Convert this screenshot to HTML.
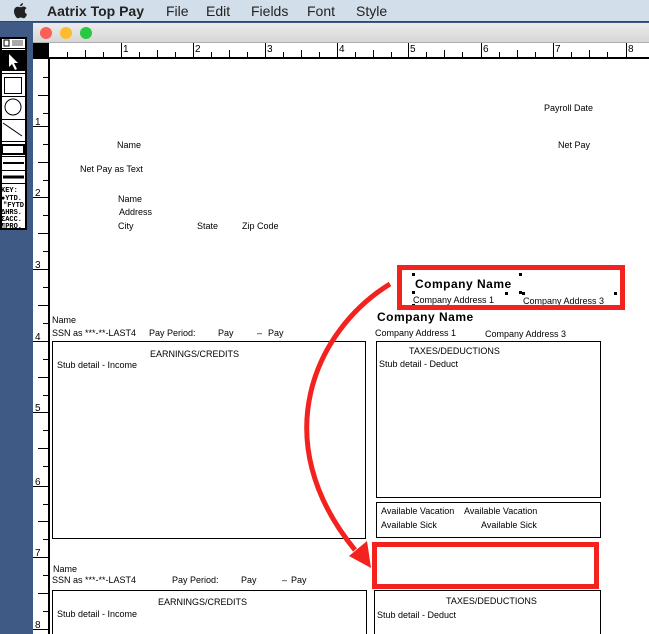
<!DOCTYPE html>
<html><head><meta charset="utf-8"><style>
*{margin:0;padding:0;box-sizing:border-box}
html{width:649px;height:634px;overflow:hidden}
body{width:649px;height:634px;overflow:hidden;background:#3f5b85;position:relative;font-family:"Liberation Sans",sans-serif;font-size:9px;color:#000}
.a{position:absolute;white-space:nowrap;line-height:10px}
.box{position:absolute;border:1px solid #000}
.red{position:absolute;border:5px solid #f4221e}
.b{font-weight:bold;font-size:12px;letter-spacing:0.5px}
</style></head><body>
<div class="a" style="left:0;top:0;width:649px;height:22px;background:#d2deea;border-bottom:1px solid #34465e"></div>
<svg class="a" style="left:13px;top:3px" width="15" height="16" viewBox="0 0 15 16"><path d="M10 0c0 2-1.5 3.3-3 3.2C7 1.5 8.5 0.2 10 0zM7.5 4.2c1 0 2-.7 3-.7 1.3 0 2.4.7 3 1.7-2.5 1.4-2 5 .5 6-.6 1.6-1.8 4-3.2 4-1.2 0-1.5-.7-2.9-.7-1.5 0-1.9.8-3 .8C3.4 15.3 1 11.5 1 8.3 1 5.3 3 3.8 4.7 3.8c1.2 0 2 .4 2.8.4z" fill="#222"/></svg>
<div class="a" style="left:47px;top:3px;font-size:14px;line-height:16px;font-weight:bold;color:#222">Aatrix Top Pay</div>
<div class="a" style="left:166px;top:3px;font-size:14px;line-height:16px;color:#222">File</div>
<div class="a" style="left:206px;top:3px;font-size:14px;line-height:16px;color:#222">Edit</div>
<div class="a" style="left:251px;top:3px;font-size:14px;line-height:16px;color:#222">Fields</div>
<div class="a" style="left:307px;top:3px;font-size:14px;line-height:16px;color:#222">Font</div>
<div class="a" style="left:356px;top:3px;font-size:14px;line-height:16px;color:#222">Style</div>
<div class="a" style="left:33px;top:23px;width:616px;height:20px;background:linear-gradient(#ececec,#d6d6d6);border-bottom:1px solid #b0b0b0"></div>
<div class="a" style="left:40px;top:27px;width:12px;height:12px;border-radius:6px;background:#fc5f57"></div>
<div class="a" style="left:60px;top:27px;width:12px;height:12px;border-radius:6px;background:#fdbc2e"></div>
<div class="a" style="left:80px;top:27px;width:12px;height:12px;border-radius:6px;background:#28c840"></div>
<div class="a" style="left:33px;top:43px;width:616px;height:591px;background:#fff"></div>
<div class="a" style="left:33px;top:43px;width:16px;height:16px;background:#000"></div>
<div class="a" style="left:49px;top:57px;width:600px;height:2px;background:#000"></div>
<div class="a" style="left:48px;top:57px;width:2px;height:577px;background:#000"></div>
<svg class="a" style="left:0;top:0" width="649" height="634">
<g stroke="#000" stroke-width="1" shape-rendering="crispEdges">
<path d="M67.5 52V57M85.5 50V57M103.5 52V57M121.5 43V57M139.5 52V57M157.5 50V57M175.5 52V57M193.5 43V57M211.5 52V57M229.5 50V57M247.5 52V57M265.5 43V57M283.5 52V57M301.5 50V57M319.5 52V57M337.5 43V57M355.5 52V57M373.5 50V57M391.5 52V57M408.5 43V57M426.5 52V57M444.5 50V57M462.5 52V57M481.5 43V57M499.5 52V57M517.5 50V57M535.5 52V57M553.5 43V57M571.5 52V57M589.5 50V57M607.5 52V57M626.5 43V57"/>
<path d="M43 77.5H48M38 95.5H48M43 113.5H48M33 126.5H48M43 144.5H48M38 162.5H48M43 180.5H48M33 197.5H48M43 215.5H48M38 233.5H48M43 251.5H48M33 269.5H48M43 287.5H48M38 305.5H48M43 323.5H48M33 341.5H48M43 359.5H48M38 377.5H48M43 395.5H48M33 412.5H48M43 430.5H48M38 448.5H48M43 466.5H48M33 486.5H48M43 504.5H48M38 521.5H48M43 539.5H48M33 557.5H48M43 575.5H48M38 593.5H48M43 611.5H48M33 629.5H48"/>
</g>
<g font-family="Liberation Sans" font-size="10">
<text x="123" y="52">1</text><text x="195" y="52">2</text><text x="267" y="52">3</text><text x="339" y="52">4</text><text x="410" y="52">5</text><text x="483" y="52">6</text><text x="555" y="52">7</text><text x="628" y="52">8</text>
<text x="35" y="125">1</text><text x="35" y="196">2</text><text x="35" y="268">3</text><text x="35" y="340">4</text><text x="35" y="411">5</text><text x="35" y="485">6</text><text x="35" y="556">7</text><text x="35" y="628">8</text>
</g>
</svg>
<div class="a" style="left:0;top:37px;width:27px;height:193px;background:#fff;border:2px solid #000"></div>
<div class="a" style="left:2px;top:50px;width:23px;height:21px;background:#000"></div>
<svg class="a" style="left:0;top:37px" width="27" height="193">
<path d="M9 17l0 13 3-3 3 6 2-1-3-6 4 0z" fill="#fff"/>
<rect x="4" y="3" width="5" height="6" fill="none" stroke="#000"/>
<rect x="12" y="3" width="11" height="6" fill="#aaa"/>
<path d="M2 11.5H25M2 36.5H25M2 59.5H25M2 82.5H25M2 104.5H25M2 119.5H25M2 133.5H25M2 146.5H25" stroke="#000"/>
<rect x="4.5" y="40.5" width="17" height="16" fill="none" stroke="#000"/>
<circle cx="13" cy="70" r="8" fill="none" stroke="#000"/>
<path d="M3 86L22 99" stroke="#000"/>
<rect x="2" y="108" width="22" height="9" fill="none" stroke="#000" stroke-width="2"/>
<path d="M3 126H24" stroke="#000" stroke-width="2"/>
<path d="M3 140H24" stroke="#000" stroke-width="3"/>
<g font-family="Liberation Mono" font-size="7" font-weight="bold"><text x="1" y="155">KEY:</text><text x="1" y="163">●YTD.</text><text x="3" y="170">"FYTD</text><text x="1" y="177">ΔHRS.</text><text x="1" y="184">ΣACC.</text><text x="1" y="191">¶PRO.</text></g>
</svg>
<div class="a" style="left:544px;top:103px">Payroll Date</div>
<div class="a" style="left:558px;top:140px">Net Pay</div>
<div class="a" style="left:117px;top:140px">Name</div>
<div class="a" style="left:80px;top:164px">Net Pay as Text</div>
<div class="a" style="left:118px;top:194px">Name</div>
<div class="a" style="left:119px;top:207px">Address</div>
<div class="a" style="left:118px;top:221px">City</div>
<div class="a" style="left:197px;top:221px">State</div>
<div class="a" style="left:242px;top:221px">Zip Code</div>
<div class="a" style="left:52px;top:315px">Name</div>
<div class="a" style="left:52px;top:328px">SSN as ***-**-LAST4</div>
<div class="a" style="left:149px;top:328px">Pay Period:</div>
<div class="a" style="left:218px;top:328px">Pay</div>
<div class="a" style="left:257px;top:328px">–</div>
<div class="a" style="left:268px;top:328px">Pay</div>
<div class="a b" style="left:377px;top:311px;line-height:13px">Company Name</div>
<div class="a" style="left:375px;top:328px">Company Address 1</div>
<div class="a" style="left:485px;top:329px">Company Address 3</div>
<div class="a b" style="left:415px;top:278px;line-height:13px">Company Name</div>
<div class="a" style="left:413px;top:295px">Company Address 1</div>
<div class="a" style="left:523px;top:296px">Company Address 3</div>
<svg class="a" style="left:0;top:0" width="649" height="634"><g fill="#000">
<rect x="412" y="273" width="3" height="3"/><rect x="519" y="273" width="3" height="3"/><rect x="412" y="291" width="3" height="3"/><rect x="519" y="291" width="3" height="3"/><rect x="412" y="304" width="3" height="3"/><rect x="505" y="292" width="3" height="3"/><rect x="505" y="305" width="3" height="3"/><rect x="522" y="292" width="3" height="3"/><rect x="614" y="292" width="3" height="3"/><rect x="614" y="305" width="3" height="3"/><rect x="522" y="305" width="3" height="3"/></g></svg>
<div class="box" style="left:52px;top:341px;width:314px;height:198px"></div>
<div class="a" style="left:150px;top:349px">EARNINGS/CREDITS</div>
<div class="a" style="left:57px;top:360px">Stub detail - Income</div>
<div class="box" style="left:376px;top:341px;width:225px;height:157px"></div>
<div class="a" style="left:409px;top:346px">TAXES/DEDUCTIONS</div>
<div class="a" style="left:379px;top:359px">Stub detail - Deduct</div>
<div class="box" style="left:376px;top:502px;width:225px;height:36px"></div>
<div class="a" style="left:381px;top:506px">Available Vacation</div>
<div class="a" style="left:464px;top:506px">Available Vacation</div>
<div class="a" style="left:381px;top:520px">Available Sick</div>
<div class="a" style="left:481px;top:520px">Available Sick</div>
<div class="a" style="left:53px;top:564px">Name</div>
<div class="a" style="left:52px;top:575px">SSN as ***-**-LAST4</div>
<div class="a" style="left:172px;top:575px">Pay Period:</div>
<div class="a" style="left:241px;top:575px">Pay</div>
<div class="a" style="left:282px;top:575px">–</div>
<div class="a" style="left:291px;top:575px">Pay</div>
<div class="box" style="left:52px;top:590px;width:315px;height:44px;border-bottom:none"></div>
<div class="a" style="left:158px;top:597px">EARNINGS/CREDITS</div>
<div class="a" style="left:57px;top:609px">Stub detail - Income</div>
<div class="box" style="left:374px;top:590px;width:227px;height:44px;border-bottom:none"></div>
<div class="a" style="left:446px;top:596px">TAXES/DEDUCTIONS</div>
<div class="a" style="left:377px;top:610px">Stub detail - Deduct</div>
<div class="red" style="left:397px;top:265px;width:228px;height:45px"></div>
<div class="red" style="left:372px;top:542px;width:227px;height:47px"></div>
<svg class="a" style="left:0;top:0" width="649" height="634">
<path d="M390 284C315 330 265 440 355 550" fill="none" stroke="#f4221e" stroke-width="5"/>
<path d="M371 568L349 556 367 541z" fill="#f4221e"/>
</svg>
</body></html>
